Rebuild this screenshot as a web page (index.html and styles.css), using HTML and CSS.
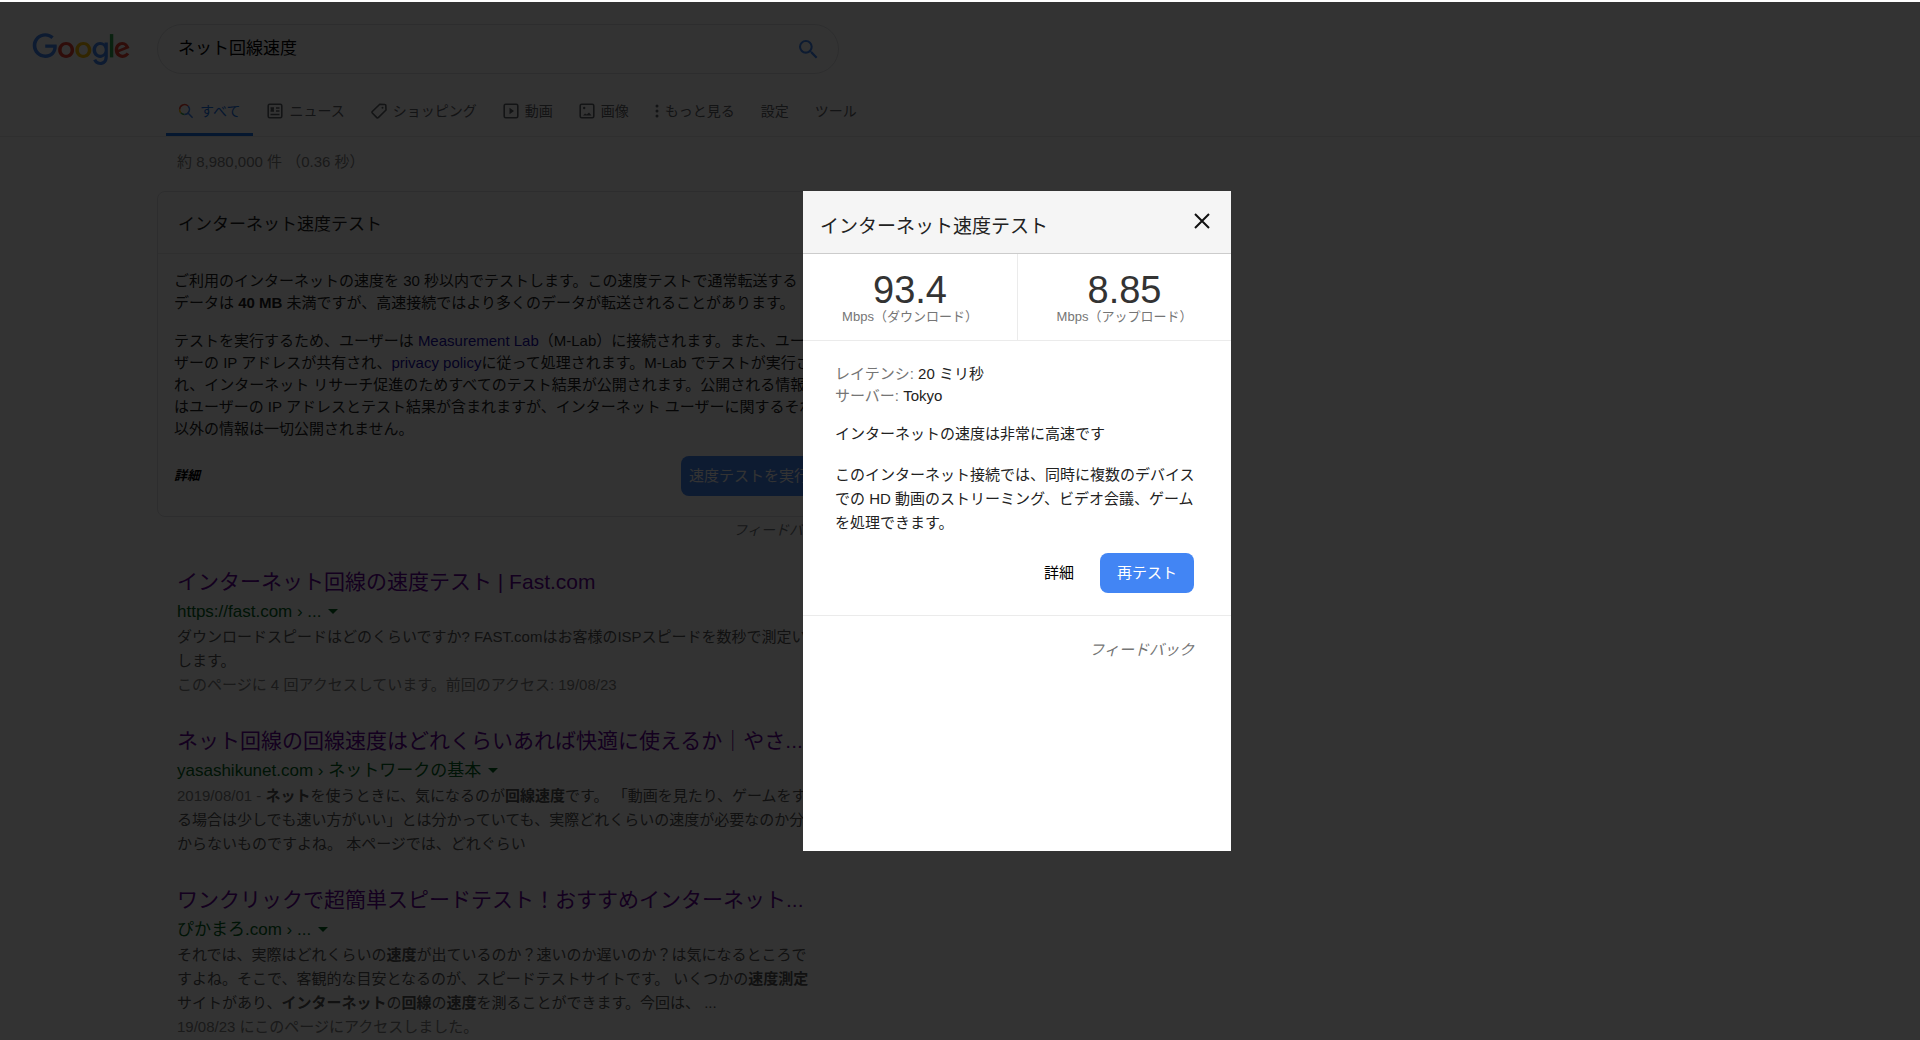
FILE: index.html
```html
<!DOCTYPE html>
<html lang="ja">
<head>
<meta charset="utf-8">
<meta name="viewport" content="width=device-width, initial-scale=1">
<title>ネット回線速度 - Google 検索</title>
<link rel="stylesheet" href="styles.css">
</head>
<body>
<div class="page">
  <header class="header">
    <div class="search-row">
      <a class="logo" href="#" aria-label="Google">
        <svg viewBox="0 0 270 92" width="98" height="33" aria-hidden="true">
          <path fill="#EA4335" d="M115.75 47.18c0 12.77-9.99 22.18-22.25 22.18s-22.25-9.41-22.25-22.18C71.25 34.32 81.24 25 93.5 25s22.25 9.32 22.25 22.18zm-9.74 0c0-7.98-5.79-13.44-12.51-13.44S80.99 39.2 80.99 47.18c0 7.9 5.79 13.44 12.51 13.44s12.51-5.55 12.51-13.44z"/>
          <path fill="#FBBC05" d="M163.75 47.18c0 12.77-9.99 22.18-22.25 22.18s-22.25-9.41-22.25-22.18c0-12.85 9.99-22.18 22.25-22.18s22.25 9.32 22.25 22.18zm-9.74 0c0-7.98-5.79-13.44-12.51-13.44s-12.51 5.46-12.51 13.44c0 7.9 5.79 13.44 12.51 13.44s12.51-5.55 12.51-13.44z"/>
          <path fill="#4285F4" d="M209.75 26.34v39.82c0 16.38-9.66 23.07-21.08 23.07-10.75 0-17.22-7.19-19.66-13.07l8.48-3.53c1.51 3.61 5.21 7.87 11.17 7.87 7.31 0 11.84-4.51 11.84-13v-3.19h-.34c-2.18 2.69-6.38 5.04-11.68 5.04-11.09 0-21.25-9.66-21.25-22.09 0-12.52 10.16-22.26 21.25-22.26 5.29 0 9.49 2.35 11.68 4.96h.34v-3.61h9.25zm-8.56 20.92c0-7.81-5.21-13.52-11.84-13.52-6.72 0-12.35 5.71-12.35 13.52 0 7.73 5.63 13.36 12.35 13.36 6.63 0 11.84-5.63 11.84-13.36z"/>
          <path fill="#34A853" d="M225 3v65h-9.5V3h9.5z"/>
          <path fill="#EA4335" d="M262.02 54.48l7.56 5.04c-2.44 3.61-8.32 9.83-18.48 9.83-12.6 0-22.01-9.74-22.01-22.18 0-13.19 9.49-22.18 20.92-22.18 11.51 0 17.14 9.16 18.98 14.11l1.01 2.52-29.65 12.28c2.27 4.45 5.8 6.72 10.75 6.72 4.96 0 8.4-2.44 10.92-6.14zm-23.27-7.98l19.82-8.23c-1.09-2.77-4.37-4.7-8.23-4.7-4.95 0-11.84 4.37-11.59 12.93z"/>
          <path fill="#4285F4" d="M35.29 41.41V32H67c.31 1.64.47 3.58.47 5.68 0 7.06-1.93 15.79-8.15 22.01-6.05 6.3-13.78 9.66-24.02 9.66C16.32 69.35.36 53.89.36 34.91.36 15.93 16.32.47 35.3.47c10.5 0 17.98 4.12 23.6 9.49l-6.64 6.64c-4.03-3.78-9.49-6.72-16.97-6.72-13.86 0-24.7 11.17-24.7 25.03 0 13.86 10.84 25.03 24.7 25.03 8.99 0 14.11-3.61 17.39-6.89 2.66-2.66 4.41-6.46 5.1-11.65l-22.49.01z"/>
        </svg>
      </a>
      <form class="search-box">
        <input class="search-input" type="text" value="ネット回線速度" aria-label="検索">
        <button class="search-button" type="button" aria-label="Google 検索">
          <svg viewBox="3 3 18 18" width="19" height="19" fill="#4285f4" aria-hidden="true"><path d="M15.5 14h-.79l-.28-.27A6.47 6.47 0 0 0 16 9.5 6.5 6.5 0 1 0 9.5 16c1.61 0 3.09-.59 4.23-1.57l.27.28v.79l5 4.99L20.49 19l-4.99-5zm-6 0C7.01 14 5 11.99 5 9.5S7.01 5 9.5 5 14 7.01 14 9.5 11.99 14 9.5 14z"/></svg>
        </button>
      </form>
    </div>
    <nav class="tabs">
      <a class="tab tab-active" href="#"><svg class="tab-icon" viewBox="0 0 16 16" fill="none" stroke-width="1.500" aria-hidden="true"><path stroke="#34a853" d="M2.800 9.800A5 5 0 0 0 6.500 11.500"/><path stroke="#fbbc05" d="M1.600 6.500a5 5 0 0 0 1.200 3.300"/><path stroke="#ea4335" d="M10 3A5 5 0 0 0 1.600 6.500"/><path stroke="#4285f4" d="M6.500 11.500A5 5 0 0 0 10 3M10 10l4.600 4.800"/></svg>すべて</a>
      <a class="tab" href="#"><svg class="tab-icon" viewBox="0 0 16 16" fill="none" stroke="currentColor" stroke-width="1.600" aria-hidden="true"><rect x="1.200" y="1.200" width="13.600" height="13.600" rx="1.500"/><path d="M3.500 5H7M3.500 8H7M9 5h3.500M9 8h3.500M3.500 11.500h9M4.500 5v3M6 5v3"/></svg>ニュース</a>
      <a class="tab" href="#"><svg class="tab-icon" viewBox="0 0 16 16" fill="none" stroke="currentColor" stroke-width="1.600" aria-hidden="true"><path d="M8.800 1.200 14 1.500q.8 0 .8.800L15 7 7.300 14.600q-.8.600-1.500 0L1.300 10q-.6-.8 0-1.500z"/><circle cx="11.500" cy="4.800" r="1" fill="currentColor" stroke="none"/></svg>ショッピング</a>
      <a class="tab" href="#"><svg class="tab-icon" viewBox="0 0 16 16" fill="none" stroke="currentColor" stroke-width="1.600" aria-hidden="true"><rect x="1.200" y="1.200" width="13.600" height="13.600" rx="1.500"/><path d="M6.500 4.800v6.400L11 8z" fill="currentColor" stroke="none"/></svg>動画</a>
      <a class="tab" href="#"><svg class="tab-icon" viewBox="0 0 16 16" fill="none" stroke="currentColor" stroke-width="1.600" aria-hidden="true"><rect x="1.200" y="1.200" width="13.600" height="13.600" rx="1.500"/><path d="M4 12.600 6 10.500l1.800 1.100L10 9.500l2.500 3.100z" fill="currentColor" stroke="none"/><circle cx="5.200" cy="5" r="1.200" fill="currentColor" stroke="none"/></svg>画像</a>
      <a class="tab" href="#"><svg class="dots-icon" viewBox="0 0 4 16" fill="currentColor" aria-hidden="true"><circle cx="2" cy="3" r="1.500"/><circle cx="2" cy="8" r="1.500"/><circle cx="2" cy="13" r="1.500"/></svg>もっと見る</a>
      <a class="tab" href="#">設定</a>
      <a class="tab" href="#">ツール</a>
    </nav>
  </header>

  <main class="results">
    <p class="stats">約 8,980,000 件 （0.36 秒）</p>

    <section class="card">
      <h2 class="card-title">インターネット速度テスト</h2>
      <div class="card-body">
        <p>ご利用のインターネットの速度を 30 秒以内でテストします。この速度テストで通常転送する<br>データは <b>40 MB</b> 未満ですが、高速接続ではより多くのデータが転送されることがあります。</p>
        <p>テストを実行するため、ユーザーは <a href="#">Measurement Lab</a>（M-Lab）に接続されます。また、ユー<br>ザーの IP アドレスが共有され、<a href="#">privacy policy</a>に従って処理されます。M-Lab でテストが実行さ<br>れ、インターネット リサーチ促進のためすべてのテスト結果が公開されます。公開される情報に<br>はユーザーの IP アドレスとテスト結果が含まれますが、インターネット ユーザーに関するそれ<br>以外の情報は一切公開されません。</p>
        <div class="card-actions">
          <a class="card-more" href="#">詳細</a>
          <button class="run-button" type="button">速度テストを実行</button>
        </div>
      </div>
    </section>
    <a class="card-feedback" href="#">フィードバック</a>

    <article class="result">
      <h3 class="result-title"><a href="#">インターネット回線の速度テスト | Fast.com</a></h3>
      <div class="result-url">https://fast.com › ... <span class="caret"></span></div>
      <p class="snippet">ダウンロードスピードはどのくらいですか? FAST.comはお客様のISPスピードを数秒で測定いた<br>します。<br><span class="muted">このページに 4 回アクセスしています。前回のアクセス: 19/08/23</span></p>
    </article>

    <article class="result">
      <h3 class="result-title"><a href="#">ネット回線の回線速度はどれくらいあれば快適に使えるか｜やさ...</a></h3>
      <div class="result-url">yasashikunet.com › ネットワークの基本 <span class="caret"></span></div>
      <p class="snippet"><span class="muted">2019/08/01 - </span><b>ネット</b>を使うときに、気になるのが<b>回線速度</b>です。 「動画を見たり、ゲームをす<br>る場合は少しでも速い方がいい」とは分かっていても、実際どれくらいの速度が必要なのか分<br>からないものですよね。 本ページでは、どれぐらい</p>
    </article>

    <article class="result">
      <h3 class="result-title"><a href="#">ワンクリックで超簡単スピードテスト！おすすめインターネット...</a></h3>
      <div class="result-url">ぴかまろ.com › ... <span class="caret"></span></div>
      <p class="snippet">それでは、実際はどれくらいの<b>速度</b>が出ているのか？速いのか遅いのか？は気になるところで<br>すよね。そこで、客観的な目安となるのが、スピードテストサイトです。 いくつかの<b>速度測定</b><br>サイトがあり、<b>インターネット</b>の<b>回線</b>の<b>速度</b>を測ることができます。今回は、 ...<br><span class="muted">19/08/23 にこのページにアクセスしました。</span></p>
    </article>
  </main>
</div>

<div class="overlay">
  <section class="dialog" role="dialog" aria-labelledby="dialog-title">
    <header class="dialog-header">
      <h2 class="dialog-title" id="dialog-title">インターネット速度テスト</h2>
      <button class="close-button" type="button" aria-label="閉じる">
        <svg viewBox="0 0 16 16" width="16" height="16" stroke="#111" stroke-width="2" aria-hidden="true"><path d="M1 1l14 14M15 1L1 15"/></svg>
      </button>
    </header>
    <div class="speeds">
      <div class="speed"><div class="speed-value">93.4</div><div class="speed-unit">Mbps（ダウンロード）</div></div>
      <div class="speed"><div class="speed-value">8.85</div><div class="speed-unit">Mbps（アップロード）</div></div>
    </div>
    <div class="dialog-body">
      <p class="detail"><span class="label">レイテンシ:</span> 20 ミリ秒<br><span class="label">サーバー:</span> Tokyo</p>
      <p class="verdict">インターネットの速度は非常に高速です</p>
      <p class="advice">このインターネット接続では、同時に複数のデバイスでの HD 動画のストリーミング、ビデオ会議、ゲームを処理できます。</p>
      <div class="dialog-actions">
        <a class="dialog-more" href="#">詳細</a>
        <button class="retry-button" type="button">再テスト</button>
      </div>
    </div>
    <footer class="dialog-footer"><a href="#">フィードバック</a></footer>
  </section>
</div>
</body>
</html>
```
FILE: styles.css
```css
* {
  box-sizing: border-box;
}

body {
  margin: 0;
  min-height: 100vh;
  background: #fff;
  color: #222;
  font: 15px/22px "Liberation Sans", "Noto Sans CJK JP", sans-serif;
}

h2,
h3,
p {
  margin: 0;
  font-weight: normal;
}

a {
  color: inherit;
  text-decoration: none;
}

button,
input {
  border: 0;
  padding: 0;
  background: none;
  font: inherit;
  color: inherit;
}

.page {
  height: 100vh;
  overflow: hidden;
}

/* Header */
.header {
  padding-top: 24px;
  border-bottom: 1px solid #ebebeb;
}

.search-row {
  display: flex;
  padding-left: 32px;
}

.logo {
  width: 125px;
  padding-top: 9px;
}

.logo svg {
  display: block;
}

.search-box {
  display: flex;
  align-items: center;
  width: 682px;
  height: 50px;
  padding: 0 20px;
  border: 1px solid #dfe1e5;
  border-radius: 25px;
}

.search-input {
  flex: 1;
  color: #000;
  font-size: 17px;
  outline: 0;
}

.search-button {
  display: flex;
}

.tabs {
  display: flex;
  gap: 2px;
  margin-top: 12px;
  padding-left: 166px;
  color: #5f6368;
  font-size: 14px;
}

.tab {
  display: flex;
  align-items: center;
  gap: 6px;
  height: 50px;
  padding: 2px 12px 0;
  border-bottom: 3px solid transparent;
}

.tab-active {
  padding-right: 13px;
  color: #1a73e8;
  border-bottom-color: #1a73e8;
}

.tab-icon {
  width: 16px;
  height: 16px;
}

.dots-icon {
  width: 4px;
  height: 16px;
}

/* Results */
.results {
  width: 682px;
  margin-left: 157px;
}

.stats {
  padding: 14px 20px 18px;
  color: #808080;
}

.card {
  border: 1px solid #dfe1e5;
  border-radius: 8px;
}

.card-title {
  padding: 22px 20px 17px;
  border-bottom: 1px solid #ebebeb;
  font-size: 17px;
}

.card-body {
  padding: 16px 16px 20px;
  white-space: nowrap;
}

.card-body p {
  margin-bottom: 16px;
}

.card-body p a {
  color: #1a0dab;
}

.card-actions {
  display: flex;
  align-items: center;
  justify-content: space-between;
}

.card-more {
  color: #000;
  font-size: 13px;
  font-style: italic;
  font-weight: bold;
}

.run-button {
  height: 40px;
  margin-right: 5px;
  padding: 0 8px;
  border-radius: 8px;
  background: #4285f4;
  color: #fff;
}

.card-feedback {
  display: block;
  padding: 2px 8px 0 0;
  color: #70757a;
  font-size: 14px;
  font-style: italic;
  text-align: right;
}

.result {
  margin: 25px 0 28px 20px;
  white-space: nowrap;
}

.result + .result {
  margin-top: 0;
}

.result-title {
  color: #609;
  font-size: 21px;
  line-height: 32px;
}

.result-url {
  color: #006621;
  font-size: 17px;
  line-height: 27px;
}

.caret {
  display: inline-block;
  margin: 0 0 3px 2px;
  border: 5px solid transparent;
  border-top-color: #006621;
  border-bottom: 0;
}

.snippet {
  color: #545454;
  line-height: 24px;
}

.muted {
  color: #808080;
}

/* Dialog */
.overlay {
  position: fixed;
  inset: 2px 0 0;
  background: rgba(0, 0, 0, 0.8);
}

.dialog {
  position: absolute;
  top: 189px;
  left: 803px;
  width: 428px;
  min-height: 660px;
  background: #fff;
}

.dialog-header {
  display: flex;
  align-items: flex-start;
  justify-content: space-between;
  height: 63px;
  padding: 22px 21px 0 17px;
  border-bottom: 1px solid #ccc;
  background: #f5f5f5;
}

.dialog-title {
  font-size: 19px;
  line-height: 28px;
}

.close-button {
  display: flex;
}

.speeds {
  display: grid;
  grid-template-columns: 1fr 1fr;
  border-bottom: 1px solid #ebebeb;
}

.speed {
  padding: 17px 0 15px;
  text-align: center;
}

.speed + .speed {
  border-left: 1px solid #ebebeb;
}

.speed-value {
  color: #333;
  font-size: 38px;
  line-height: 38px;
}

.speed-unit {
  color: #757575;
  font-size: 13px;
  line-height: 16px;
}

.dialog-body {
  padding: 22px 32px;
  border-bottom: 1px solid #ebebeb;
}

.label {
  color: #757575;
}

.verdict {
  margin: 16px 0 18px;
}

.advice {
  line-height: 24px;
}

.dialog-actions {
  display: flex;
  align-items: center;
  justify-content: flex-end;
  gap: 26px;
  margin-top: 18px;
  padding-right: 5px;
}

.dialog-more {
  color: #000;
}

.retry-button {
  height: 40px;
  padding: 0 17px;
  border-radius: 8px;
  background: #4285f4;
  color: #fff;
}

.dialog-footer {
  padding: 23px 37px;
  color: #757575;
  font-style: italic;
  text-align: right;
}
```
